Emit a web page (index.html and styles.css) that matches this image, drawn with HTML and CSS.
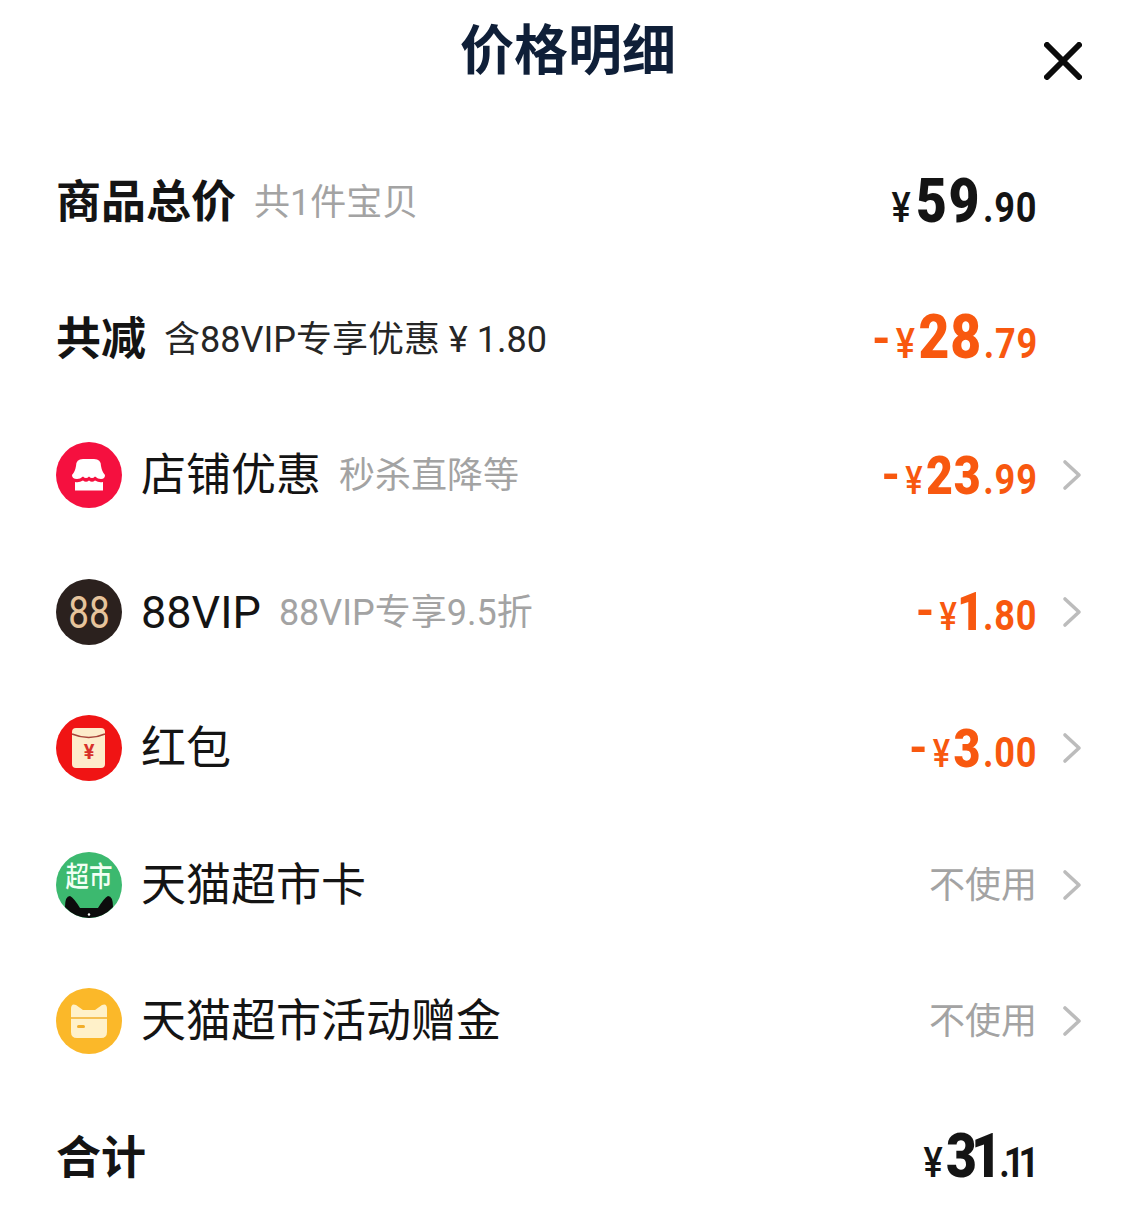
FILE: index.html
```html
<!DOCTYPE html>
<html lang="zh-CN">
<head>
  <meta charset="UTF-8" />
  <meta name="viewport" content="width=device-width, initial-scale=1.0" />
  <title>价格明细</title>
  <link rel="stylesheet" href="styles.css">
</head>
<body>
  <header class="top">
    <h1 class="title">价格明细</h1>
    <svg class="close" viewBox="0 0 38 38"><path d="M3 3 L35 35 M35 3 L3 35" /></svg>
  </header>

  <ul class="rows">
    <li class="row">
      <span class="name bold">商品总价</span>
      <span class="sub">共1件宝贝</span>
      <span class="price"><i class="cur">¥</i><b class="wide">59</b><i class="dec">.90</i></span>
      <span class="no-arrow"></span>
    </li>
    <li class="row">
      <span class="name bold">共减</span>
      <span class="sub dark">含88VIP专享优惠 ¥ 1.80</span>
      <span class="price orange"><i class="minus">-</i><i class="cur">¥</i><b>28</b><i class="dec">.79</i></span>
      <span class="no-arrow"></span>
    </li>
    <li class="row">
      <svg class="ico" viewBox="0 0 66 66">
        <circle cx="33" cy="33" r="33" fill="#f5103f" />
        <path d="M20 24 Q20 17 27 17 H38 Q45 17 45 24 Q46 30 49 33 Q49 37 45 37 Q42 37 39 34.500 Q36 37.500 33 34.500 Q30 37.500 27 34.500 Q24 37 21 37 Q16 37 16 33 Q19 30 20 24 Z" fill="#fff" />
        <path d="M19 40 Q23 41 27 38.500 Q30 41 33 38.500 Q36 41 39 38.500 Q43 41 47 40 V48.500 H19 Z" fill="#fff" />
      </svg>
      <span class="name">店铺优惠</span>
      <span class="sub">秒杀直降等</span>
      <span class="price orange small"><i class="minus">-</i><i class="cur">¥</i><b>23</b><i class="dec">.99</i></span>
      <svg class="arrow" viewBox="0 0 20 34"><path d="M3 4 L17 17 L3 30" /></svg>
    </li>
    <li class="row">
      <svg class="ico" viewBox="0 0 66 66">
        <circle cx="33" cy="33" r="33" fill="#2b211e" />
        <text class="ico-88" text-anchor="middle" transform="translate(33 49) scale(0.82 1)">88</text>
      </svg>
      <span class="name">88VIP</span>
      <span class="sub">88VIP专享9.5折</span>
      <span class="price orange small"><i class="minus">-</i><i class="cur">¥</i><b class="one">1</b><i class="dec">.80</i></span>
      <svg class="arrow" viewBox="0 0 20 34"><path d="M3 4 L17 17 L3 30" /></svg>
    </li>
    <li class="row">
      <svg class="ico" viewBox="0 0 66 66">
        <circle cx="33" cy="33" r="33" fill="#f01414" />
        <rect x="16" y="13" width="33" height="40" rx="4" fill="#fdeccb" />
        <path d="M16 19 Q33 26 49 19" fill="none" stroke="#a8443a" stroke-width="1.500" />
        <text class="ico-yen" x="33" y="44" text-anchor="middle">¥</text>
      </svg>
      <span class="name">红包</span>
      <span class="price orange small"><i class="minus">-</i><i class="cur">¥</i><b>3</b><i class="dec">.00</i></span>
      <svg class="arrow" viewBox="0 0 20 34"><path d="M3 4 L17 17 L3 30" /></svg>
    </li>
    <li class="row">
      <svg class="ico" viewBox="0 0 66 66">
        <circle cx="33" cy="33" r="33" fill="#3cb96f" />
        <text class="ico-shi" text-anchor="middle" transform="translate(33 35) scale(0.94 1.150)">超市</text>
        <path d="M9 55 Q9 44 14 44 Q18 46 24 56 H42 Q48 46 52 44 Q57 44 57 55 Q47 66 33 66 Q19 66 9 55 Z" fill="#0c0c0c" />
        <circle cx="33" cy="62.500" r="1.200" fill="#fff" />
      </svg>
      <span class="name">天猫超市卡</span>
      <span class="off">不使用</span>
      <svg class="arrow" viewBox="0 0 20 34"><path d="M3 4 L17 17 L3 30" /></svg>
    </li>
    <li class="row">
      <svg class="ico" viewBox="0 0 66 66">
        <circle cx="33" cy="33" r="33" fill="#fbb829" />
        <path d="M15 21 Q15 15 20 17 L27 22 H39 L46 17 Q51 15 51 21 V44 Q51 50 45 50 H21 Q15 50 15 44 Z" fill="#fff1c9" />
        <path d="M15 30 H51" stroke="#f2ae2a" stroke-width="1.500" />
        <rect x="21" y="37" width="8" height="3" rx="1.500" fill="#f2ae2a" />
      </svg>
      <span class="name">天猫超市活动赠金</span>
      <span class="off">不使用</span>
      <svg class="arrow" viewBox="0 0 20 34"><path d="M3 4 L17 17 L3 30" /></svg>
    </li>
    <li class="row">
      <span class="name bold">合计</span>
      <span class="price"><i class="cur">¥</i><b class="tight">31</b><i class="dec small-dec">.11</i></span>
      <span class="no-arrow"></span>
    </li>
  </ul>
</body>
</html>
```

FILE: styles.css
```css
* {
  box-sizing: border-box;
}
body {
  margin: 0;
  background: #fff;
  color: #111;
  font-family: "Roboto", "Noto Sans CJK SC", sans-serif;
  height: 1210px;
  overflow: hidden;
}
.top {
  display: flex;
  justify-content: center;
  height: 134px;
  position: relative;
}
.title {
  margin: 13px 0 0;
  font-size: 54px;
  line-height: 78px;
  font-weight: 700;
  color: #0f1f38;
}
.close {
  position: absolute;
  left: 1044px;
  top: 42px;
  width: 38px;
  height: 38px;
  fill: none;
  stroke: #0b0b0b;
  stroke-width: 6;
  stroke-linecap: round;
}
.rows {
  list-style: none;
  margin: 0;
  padding: 0 53px 0 56px;
}
.row {
  display: flex;
  align-items: center;
  height: 136.500px;
}
.ico {
  width: 66px;
  height: 66px;
  margin-right: 19px;
  flex: none;
}
.ico-88 {
  font-family: "Roboto", sans-serif;
  font-size: 45px;
  font-weight: 400;
  fill: #e6c49c;
}
.ico-yen {
  font-family: "Roboto", sans-serif;
  font-size: 20px;
  font-weight: 700;
  fill: #d8312a;
}
.ico-shi {
  font-family: "Noto Sans CJK SC", sans-serif;
  font-size: 25px;
  font-weight: 500;
  fill: #f2fff4;
}
.name {
  font-size: 45px;
  line-height: 60px;
  margin-top: 2px;
  color: #141414;
}
.bold {
  font-weight: 700;
}
.sub {
  margin-left: 18px;
  margin-top: 2px;
  font-size: 36px;
  line-height: 48px;
  color: #a3a3a3;
}
.sub.dark {
  color: #262626;
}
.price {
  margin-left: auto;
  margin-top: 4px;
  font-family: "Roboto", sans-serif;
  font-size: 62px;
  font-weight: 700;
  line-height: 70px;
  color: #141414;
  display: flex;
  align-items: baseline;
  transform: scaleX(0.86);
  transform-origin: right center;
}
.price i {
  font-style: normal;
}
.price b {
  letter-spacing: 1px;
}
.price .cur {
  font-size: 42px;
  font-weight: 500;
  margin-right: 4px;
}
.price .minus {
  font-size: 58px;
  font-weight: 500;
  margin-right: 7px;
}
.price .dec {
  font-size: 42px;
  margin-left: 2px;
  margin-right: -1px;
  letter-spacing: 1px;
}
.price.small {
  font-size: 54px;
}
.price.small .cur {
  font-size: 38px;
}
.price .wide {
  letter-spacing: 2px;
  margin-left: 2px;
}
.price .one {
  margin-left: -4px;
  margin-right: -4px;
}
.price .tight {
  letter-spacing: -7px;
  margin-right: 2px;
}
.price .small-dec {
  letter-spacing: -7px;
  margin-right: 4px;
}
.orange {
  color: #f8580f;
}
.off {
  margin-left: auto;
  margin-top: 2px;
  font-size: 36px;
  line-height: 48px;
  color: #a3a3a3;
}
.arrow {
  width: 20px;
  height: 34px;
  margin-left: 25px;
  margin-right: 1px;
  fill: none;
  stroke: #bcbcbc;
  stroke-width: 3.600;
  stroke-linecap: round;
  stroke-linejoin: round;
  flex: none;
}
.no-arrow {
  width: 46px;
  flex: none;
}
```
